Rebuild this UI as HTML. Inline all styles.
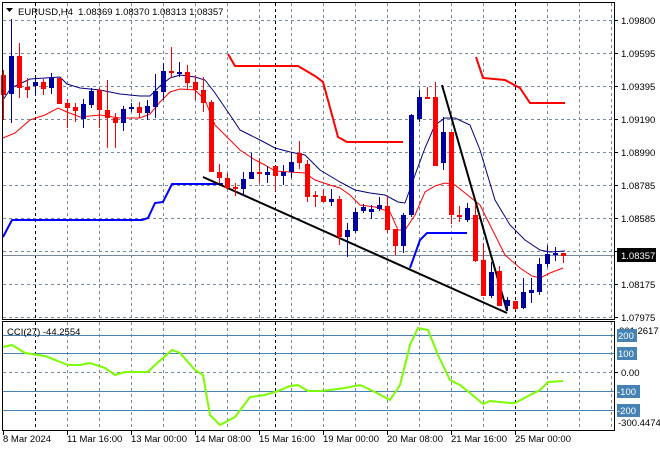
<!DOCTYPE html>
<html><head><meta charset="utf-8"><style>
body{margin:0;background:#fff;}
svg{display:block;font-family:"Liberation Sans",sans-serif;}
</style></head><body>
<svg width="660" height="450" viewBox="0 0 660 450" xmlns="http://www.w3.org/2000/svg">
<rect width="660" height="450" fill="#fff"/>
<g stroke="#778899" stroke-width="1" stroke-dasharray="3,3" fill="none">
<path d="M3 20.5H614M3 53.5H614M3 86.5H614M3 119.5H614M3 152.5H614M3 185.5H614M3 218.5H614M3 251.5H614M3 284.5H614M3 317.5H614"/>
<path d="M3 372.5H614"/>
<path d="M67.5 3V319M99.5 3V319M131.5 3V319M163.5 3V319M195.5 3V319M227.5 3V319M259.5 3V319M291.5 3V319M323.5 3V319M355.5 3V319M387.5 3V319M419.5 3V319M451.5 3V319M483.5 3V319M547.5 3V319M579.5 3V319M611.5 3V319"/>
<path d="M67.5 322V430M99.5 322V430M131.5 322V430M163.5 322V430M195.5 322V430M227.5 322V430M259.5 322V430M291.5 322V430M323.5 322V430M355.5 322V430M387.5 322V430M419.5 322V430M451.5 322V430M483.5 322V430M547.5 322V430M579.5 322V430M611.5 322V430"/>
</g>
<g stroke="#000" stroke-dasharray="3,3"><path d="M35.5 3V319M275.5 3V319M515.5 3V319M35.5 322V430M275.5 322V430M515.5 322V430"/></g>
<g stroke="#4682b4"><path d="M3 335.5H614M3 353.5H614M3 391.5H614M3 410.5H614"/></g>
<path d="M3 255.5H614" stroke="#778899"/>
<polyline fill="none" stroke="#000080" stroke-width="1" points="3,100 11,88 30,79 60,77 67,84 80,88 100,90 120,94 140,96 150,96 160,86 170,78 180,75 195,77 205,80 215,93 230,115 240,130 250,135 260,140 275,148 290,152 305,155 320,170 340,182 355,190 370,193 385,195 398,202 405,203 415,175 425,148 435,125 445,118 455,118 470,125 480,150 495,200 510,225 525,240 540,250 550,252 565,251"/>
<polyline fill="none" stroke="#ff0000" stroke-width="1" points="3,138 15,133 30,120 45,115 58,108 67,112 80,117 100,115 120,118 140,118 150,114 160,102 170,92 180,89 195,90 205,100 215,125 230,140 240,150 255,160 265,165 275,171 290,172 305,173 315,180 330,185 340,188 350,195 360,205 375,207 390,212 398,230 405,230 415,215 425,192 435,186 445,183 455,185 465,193 480,205 495,235 505,255 520,268 532,276 540,278 550,273 563,268"/>
<polyline fill="none" stroke="#ff0000" stroke-width="2" points="228,54 235,66 298,66 315,76 323,82 338,137 347,142 403,142"/>
<polyline fill="none" stroke="#ff0000" stroke-width="2" points="476,57 483,78 505,80 520,88 530,103 565,103"/>
<polyline fill="none" stroke="#0000ff" stroke-width="2" points="3,237 12,220 142,220 148,218 155,203 163,202 172,184 223,184"/>
<polyline fill="none" stroke="#0000ff" stroke-width="2" points="410,268 420,240 427,233 467,233"/>
<path d="M203 177L507 313M442 85L507 311" stroke="#000" stroke-width="2"/>
<g stroke-width="1">
<path stroke="#0000a0" d="M11.5 19V123M35.5 78V96M51.5 73V94M83.5 99V128M91.5 88V108M123.5 106V131M131.5 103V112M147.5 100V120M155.5 74V118M163.5 63V100M179.5 62V77M243.5 172V195M251.5 153V179M267.5 166V183M283.5 165V185M291.5 153V178M331.5 189V206M347.5 223V257M355.5 208V233M363.5 204V213M371.5 205V219M379.5 197V211M403.5 213V253M411.5 114V217M419.5 90V122M443.5 117V170M467.5 203V222M491.5 262V298M507.5 297V311M523.5 278V309M531.5 278V303M539.5 258V295M547.5 245V267M555.5 247V261"/>
<path stroke="#ff0000" d="M3.5 70V120M19.5 43V98M27.5 78V98M43.5 79V95M59.5 78V104M67.5 99V128M75.5 103V122M99.5 88V128M107.5 80V148M115.5 113V148M139.5 102V118M171.5 47V78M187.5 65V89M195.5 75V100M203.5 77V112M211.5 100V172M219.5 164V183M227.5 173V190M235.5 183V196M259.5 158V183M275.5 166V191M299.5 141V169M307.5 160V202M315.5 191V207M323.5 189V202M339.5 196V245M387.5 196V233M395.5 229V255M427.5 87V99M435.5 82V166M451.5 132V224M459.5 206V222M475.5 205V262M483.5 243V296M499.5 266V306M515.5 301V310M563.5 253V263"/>
</g>
<g fill="#0000a0">
<rect x="9" y="56" width="5" height="38"/><rect x="33" y="82" width="5" height="4"/><rect x="49" y="78" width="5" height="10"/><rect x="81" y="104" width="5" height="15"/><rect x="89" y="91" width="5" height="14"/><rect x="121" y="109" width="5" height="14"/><rect x="129" y="107" width="5" height="2"/><rect x="145" y="106" width="5" height="7"/><rect x="153" y="91" width="5" height="16"/><rect x="161" y="71" width="5" height="21"/><rect x="177" y="72" width="5" height="2"/><rect x="241" y="179" width="5" height="10"/><rect x="249" y="172" width="5" height="7"/><rect x="265" y="172" width="5" height="3"/><rect x="281" y="172" width="5" height="4"/><rect x="289" y="162" width="5" height="10"/><rect x="329" y="199" width="5" height="3"/><rect x="345" y="230" width="5" height="7"/><rect x="353" y="212" width="5" height="19"/><rect x="361" y="207" width="5" height="4"/><rect x="369" y="209" width="5" height="3"/><rect x="377" y="205" width="5" height="4"/><rect x="401" y="215" width="5" height="31"/><rect x="409" y="115" width="5" height="100"/><rect x="417" y="97" width="5" height="22"/><rect x="441" y="132" width="5" height="31"/><rect x="465" y="208" width="5" height="12"/><rect x="489" y="272" width="5" height="24"/><rect x="505" y="300" width="5" height="6"/><rect x="521" y="292" width="5" height="16"/><rect x="529" y="290" width="5" height="3"/><rect x="537" y="264" width="5" height="28"/><rect x="545" y="254" width="5" height="10"/><rect x="553" y="253" width="5" height="2"/>
</g>
<g fill="#ff0000">
<rect x="1" y="75" width="5" height="20"/><rect x="17" y="56" width="5" height="32"/><rect x="25" y="87" width="5" height="3"/><rect x="41" y="82" width="5" height="7"/><rect x="57" y="78" width="5" height="26"/><rect x="65" y="103" width="5" height="5"/><rect x="73" y="107" width="5" height="4"/><rect x="97" y="90" width="5" height="20"/><rect x="105" y="110" width="5" height="8"/><rect x="113" y="118" width="5" height="5"/><rect x="137" y="107" width="5" height="6"/><rect x="169" y="71" width="5" height="2"/><rect x="185" y="72" width="5" height="11"/><rect x="193" y="82" width="5" height="8"/><rect x="201" y="90" width="5" height="13"/><rect x="209" y="102" width="5" height="70"/><rect x="217" y="172" width="5" height="6"/><rect x="225" y="178" width="5" height="10"/><rect x="233" y="187" width="5" height="2"/><rect x="257" y="172" width="5" height="2"/><rect x="273" y="166" width="5" height="10"/><rect x="297" y="153" width="5" height="10"/><rect x="305" y="164" width="5" height="33"/><rect x="313" y="195" width="5" height="2"/><rect x="321" y="196" width="5" height="6"/><rect x="337" y="199" width="5" height="38"/><rect x="385" y="206" width="5" height="24"/><rect x="393" y="229" width="5" height="17"/><rect x="425" y="97" width="5" height="2"/><rect x="433" y="97" width="5" height="69"/><rect x="449" y="132" width="5" height="83"/><rect x="457" y="215" width="5" height="2"/><rect x="473" y="215" width="5" height="46"/><rect x="481" y="260" width="5" height="36"/><rect x="497" y="271" width="5" height="35"/><rect x="513" y="301" width="5" height="8"/><rect x="561" y="253" width="5" height="3"/>
</g>
<polyline fill="none" stroke="#7cfc00" stroke-width="2" points="3,347 12,345 25,353 45,356 68,365 80,365 90,363 105,368 115,375 125,372 135,372 148,372 155,365 172,350 180,353 195,370 203,375 210,415 220,425 235,417 250,397 265,395 278,391 290,386 298,385 308,391 320,391 330,390 345,388 360,385 375,392 390,400 400,385 410,345 418,328 428,330 438,355 450,380 460,385 470,393 483,404 490,401 510,403 515,403 530,395 540,390 548,382 563,381"/>
<g stroke="#000" fill="none" stroke-width="1">
<rect x="2.5" y="2.5" width="612" height="317"/>
<rect x="2.5" y="321.5" width="612" height="109"/>
<path d="M615 20.5h3M615 53.5h3M615 86.5h3M615 119.5h3M615 152.5h3M615 185.5h3M615 218.5h3M615 251.5h3M615 284.5h3M615 317.5h3M615 372.5h3M3.5 431v4M67.5 431v4M131.5 431v4M195.5 431v4M259.5 431v4M323.5 431v4M387.5 431v4M451.5 431v4M515.5 431v4"/>
</g>
<path d="M6 8h7l-3.5 4z" fill="#000"/>
<text x="18" y="15" font-size="9.5" fill="#000" xml:space="preserve">EURUSD,H4  1.08369 1.08370 1.08313 1.08357</text>
<text x="7" y="335" font-size="9.5" fill="#000">CCI(27) -44.2554</text>
<g font-size="9.5" fill="#000">
<text x="621" y="24">1.09800</text><text x="621" y="57">1.09595</text><text x="621" y="90">1.09395</text><text x="621" y="123">1.09190</text><text x="621" y="156">1.08990</text><text x="621" y="189">1.08785</text><text x="621" y="222">1.08585</text><text x="621" y="255">1.08380</text><text x="621" y="288">1.08175</text><text x="621" y="321">1.07975</text>
</g>
<rect x="617" y="248" width="39" height="14" fill="#000"/>
<text x="621" y="259" font-size="9.5" fill="#fff">1.08357</text>
<text x="619" y="334" font-size="9.5" fill="#000">261.2617</text>
<g fill="#4682b4"><rect x="617" y="329" width="20" height="13"/><rect x="617" y="347" width="20" height="13"/><rect x="617" y="385" width="23" height="13"/><rect x="617" y="404" width="23" height="13"/></g>
<g font-size="9.5" fill="#fff"><text x="618" y="339">200</text><text x="618" y="357">100</text><text x="617" y="395">-100</text><text x="617" y="414">-200</text></g>
<text x="621" y="376" font-size="9.5" fill="#000">0.00</text>
<text x="618" y="426" font-size="9.5" fill="#000">-300.4474</text>
<g font-size="9.5" fill="#000">
<text x="3" y="442">8 Mar 2024</text><text x="67" y="442">11 Mar 16:00</text><text x="131" y="442">13 Mar 00:00</text><text x="195" y="442">14 Mar 08:00</text><text x="259" y="442">15 Mar 16:00</text><text x="323" y="442">19 Mar 00:00</text><text x="387" y="442">20 Mar 08:00</text><text x="451" y="442">21 Mar 16:00</text><text x="515" y="442">25 Mar 00:00</text>
</g>
</svg>
</body></html>
